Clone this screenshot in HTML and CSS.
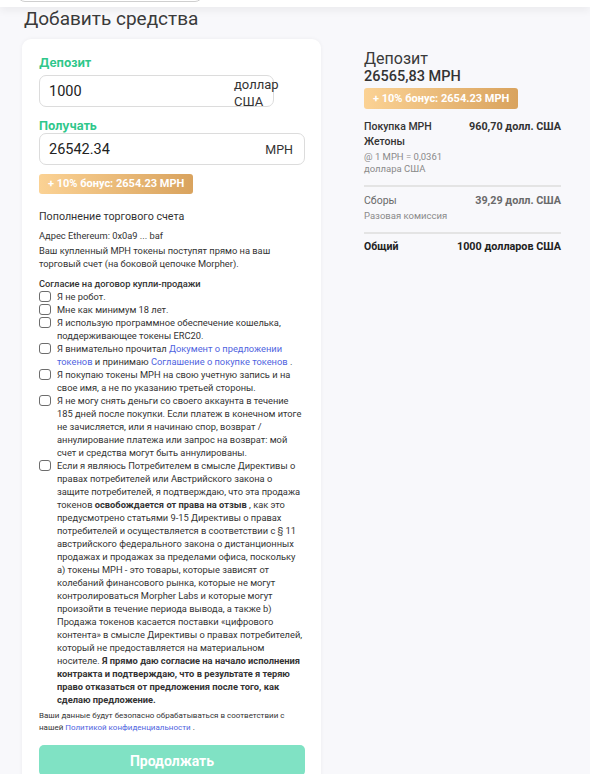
FILE: index.html
```html
<!DOCTYPE html>
<html lang="ru">
<head>
    <meta charset="UTF-8">
    <meta name="viewport" content="width=device-width, initial-scale=1.0">
    <title>Добавить средства</title>

    <link rel="stylesheet" href="styles.css">
</head>
<body>

    <!-- верхняя панель -->
    <div class="topbar">
        <div class="topbar-field"></div>
    </div>

    <h1 class="page-title">Добавить средства</h1>

    <div class="layout">

        <!-- форма покупки -->
        <div class="card">
            <div class="field-label label-first">Депозит</div>
            <div class="field field-short">
                <span class="field-value">1000</span>
                <span class="field-unit unit-wrap">доллар США</span>
            </div>

            <div class="field-label label-second">Получать</div>
            <div class="field">
                <span class="field-value">26542.34</span>
                <span class="field-unit">MPH</span>
            </div>

            <div class="bonus">+ 10% бонус: 2654.23 MPH</div>

            <div class="section-title">Пополнение торгового счета</div>
            <div class="address">Адрес Ethereum: 0x0a9 ... baf</div>
            <p class="note">Ваш купленный MPH токены поступят прямо на ваш торговый счет (на боковой цепочке Morpher).</p>

            <div class="agree-title">Согласие на договор купли-продажи</div>
            <ul class="checks">
                <li><span class="box"></span><span>Я не робот.</span></li>
                <li><span class="box"></span><span>Мне как минимум 18 лет.</span></li>
                <li><span class="box"></span><span>Я использую программное обеспечение кошелька, поддерживающее токены ERC20.</span></li>
                <li><span class="box"></span><span>Я внимательно прочитал <a href="#">Документ о предложении токенов</a> и принимаю <a href="#">Соглашение о покупке токенов</a> .</span></li>
                <li><span class="box"></span><span>Я покупаю токены MPH на свою учетную запись и на свое имя, а не по указанию третьей стороны.</span></li>
                <li><span class="box"></span><span>Я не могу снять деньги со своего аккаунта в течение 185 дней после покупки. Если платеж в конечном итоге не зачисляется, или я начинаю спор, возврат / аннулирование платежа или запрос на возврат: мой счет и средства могут быть аннулированы.</span></li>
                <li><span class="box"></span><span>Если я являюсь Потребителем в смысле Директивы о правах потребителей или Австрийского закона о защите потребителей, я подтверждаю, что эта продажа токенов <b>освобождается от права на отзыв</b> , как это предусмотрено статьями 9-15 Директивы о правах потребителей и осуществляется в соответствии с § 11 австрийского федерального закона о дистанционных продажах и продажах за пределами офиса, поскольку а) токены MPH - это товары, которые зависят от колебаний финансового рынка, которые не могут контролироваться Morpher Labs и которые могут произойти в течение периода вывода, а также b) Продажа токенов касается поставки «цифрового контента» в смысле Директивы о правах потребителей, который не предоставляется на материальном носителе. <b>Я прямо даю согласие на начало исполнения контракта и подтверждаю, что в результате я теряю право отказаться от предложения после того, как сделаю предложение.</b></span></li>
            </ul>

            <p class="privacy">Ваши данные будут безопасно обрабатываться в соответствии с нашей <a href="#">Политикой конфиденциальности</a> .</p>

            <button class="submit" disabled>Продолжать</button>
        </div>

        <!-- итог -->
        <div class="summary">
            <div class="sum-title">Депозит</div>
            <div class="sum-amount">26565,83 MPH</div>
            <div class="bonus bonus-wide">+ 10% бонус: 2654.23 MPH</div>

            <div class="sum-row">
                <div class="sum-left">
                    <div class="sum-name">Покупка MPH Жетоны</div>
                    <div class="sum-sub">@ 1 MPH = 0,0361 доллара США</div>
                </div>
                <div class="sum-value">960,70 долл. США</div>
            </div>
            <div class="sum-line"></div>

            <div class="sum-row muted">
                <div class="sum-left">
                    <div class="sum-name">Сборы</div>
                    <div class="sum-sub">Разовая комиссия</div>
                </div>
                <div class="sum-value">39,29 долл. США</div>
            </div>
            <div class="sum-line"></div>

            <div class="sum-row total">
                <div class="sum-left">
                    <div class="sum-name">Общий</div>
                </div>
                <div class="sum-value">1000 долларов США</div>
            </div>
        </div>

    </div>

</body>
</html>
```

FILE: styles.css
```css
html, body{
    overflow: hidden;
}

body{
    margin: 0;
    background-color: #f8f8fb;
    font-family: Roboto, "Noto Sans", sans-serif;
    color: #333;
}

a{
    color: #4f63e0;
    text-decoration: none;
}

/* верхняя панель с полем поиска */
.topbar{
    height: 7px;
    background-color: #fff;
    box-shadow: 0 3px 8px rgba(0, 0, 0, 0.07);
    overflow: hidden;
}

.topbar-field{
    width: 186px;
    height: 20px;
    margin: -18px 0 0 17px;
    border: 1px solid #cfcfcf;
    border-radius: 8px;
    box-sizing: border-box;
}

.page-title{
    margin: 1px 0 0 24px;
    font-size: 19px;
    line-height: 22px;
    font-weight: 400;
    color: #3a3a3a;
}

.layout{
    display: flex;
    align-items: flex-start;
    gap: 43px;
    margin: 9px 0 0 22px;
}

/* карточка формы */
.card{
    width: 299px;
    box-sizing: border-box;
    padding: 17px 16px 40px 17px;
    background-color: #fff;
    border-radius: 9px;
    box-shadow: 0 0 4px rgba(0, 0, 0, 0.05);
}

.field-label{
    font-family: Inter, Roboto, sans-serif;
    font-size: 12px;
    line-height: 14px;
    font-weight: 700;
    color: #2fc78b;
}

.label-first{
    margin-bottom: 5px;
}

.label-second{
    margin: 12px 0 0;
}

.field{
    position: relative;
    display: flex;
    align-items: center;
    justify-content: space-between;
    height: 32px;
    box-sizing: border-box;
    padding: 0 11px 0 9px;
    border: 1px solid #dcdcdc;
    border-radius: 7px;
}

.field-short{
    width: 235px;
}

.field-value{
    font-size: 14.5px;
    color: #222;
}

.field-unit{
    font-size: 12.5px;
    color: #333;
}

/* подпись валюты не помещается и переносится */
.unit-wrap{
    position: absolute;
    left: 194px;
    top: 0;
    width: 46px;
    font-size: 13px;
    line-height: 17px;
}

.bonus{
    display: inline-block;
    margin-top: 9px;
    padding: 0 9px;
    height: 20px;
    line-height: 20px;
    font-size: 11px;
    font-weight: 700;
    color: #fff;
    border-radius: 3px;
    background: linear-gradient(90deg, #fbd294, #d9a35e);
}

.section-title{
    margin-top: 15px;
    font-size: 10.7px;
    line-height: 15px;
}

.address{
    margin-top: 5px;
    font-size: 9.3px;
    line-height: 13px;
}

.note{
    margin: 2px 0 0;
    font-size: 9.3px;
    line-height: 13px;
}

.agree-title{
    margin-top: 7px;
    font-size: 9.3px;
    line-height: 13px;
    font-weight: 500;
}

.checks{
    list-style: none;
    margin: 0;
    padding: 0;
}

.checks li{
    display: flex;
    gap: 6px;
    font-size: 9.3px;
    line-height: 13px;
}

.box{
    flex: none;
    width: 12px;
    height: 11px;
    margin: 1px 0 0 0;
    border: 1px solid #6d6d6d;
    border-radius: 3px;
    box-sizing: border-box;
}

.checks b{
    font-weight: 700;
}

.privacy{
    margin: 4px 0 0;
    font-size: 8px;
    line-height: 12px;
}

.submit{
    display: block;
    width: 100%;
    height: 31px;
    margin-top: 11px;
    border: 0;
    border-radius: 5px;
    background-color: #80e2c4;
    color: #fff;
    font-family: inherit;
    font-size: 14px;
    font-weight: 700;
}

/* итог справа */
.summary{
    width: 197px;
    padding-top: 11px;
}

.sum-title{
    font-size: 16px;
    line-height: 18px;
    color: #3a3a3a;
}

.sum-amount{
    font-size: 14.5px;
    line-height: 18px;
    font-weight: 500;
}

.bonus-wide{
    margin-top: 2px;
    height: 21px;
    line-height: 21px;
}

.sum-row{
    display: flex;
    justify-content: space-between;
    padding: 10px 0 10px;
}

.sum-row.muted{
    padding-top: 6px;
    color: #6a6a6a;
}

.sum-row.total{
    padding-top: 5px;
    color: #222;
}

.sum-left{
    flex: 0 1 100px;
}

.sum-name{
    font-size: 10.5px;
    line-height: 15px;
    font-weight: 500;
}

.sum-row.muted .sum-name{
    font-weight: 400;
}

.sum-row.total .sum-name{
    font-weight: 700;
}

.sum-sub{
    margin-top: 2px;
    font-size: 9.5px;
    line-height: 12px;
    color: #8a8a8a;
}

.sum-value{
    font-size: 10.8px;
    line-height: 15px;
    font-weight: 700;
    white-space: nowrap;
}

.sum-line{
    height: 2px;
    background-color: #e4e4e4;
}
```
